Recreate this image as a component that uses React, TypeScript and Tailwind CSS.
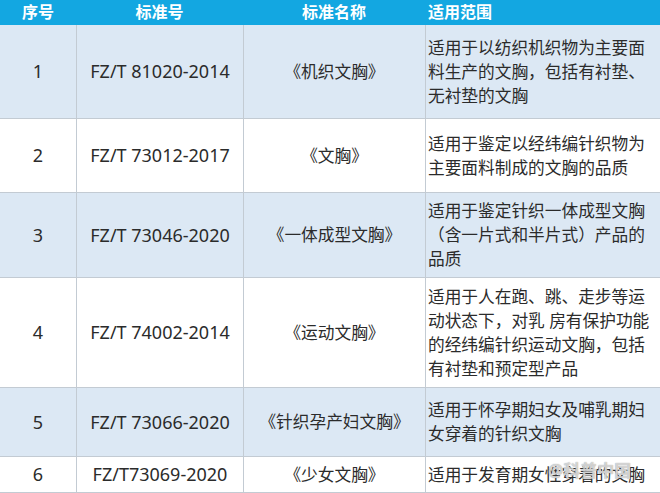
const rows = [
  {
    no: '1',
    code: 'FZ/T 81020-2014',
    name: '《机织文胸》',
    scope: ['适用于以纺织机织物为主要面', '料生产的文胸，包括有衬垫、', '无衬垫的文胸'],
    h: 'h-[94px]',
    shaded: true,
  },
  {
    no: '2',
    code: 'FZ/T 73012-2017',
    name: '《文胸》',
    scope: ['适用于鉴定以经纬编针织物为', '主要面料制成的文胸的品质'],
    h: 'h-[74px]',
    shaded: false,
  },
  {
    no: '3',
    code: 'FZ/T 73046-2020',
    name: '《一体成型文胸》',
    scope: ['适用于鉴定针织一体成型文胸', '（含一片式和半片式）产品的', '品质'],
    h: 'h-[85px]',
    shaded: true,
  },
  {
    no: '4',
    code: 'FZ/T 74002-2014',
    name: '《运动文胸》',
    scope: ['适用于人在跑、跳、走步等运', '动状态下，对乳 房有保护功能', '的经纬编针织运动文胸，包括', '有衬垫和预定型产品'],
    h: 'h-[110px]',
    shaded: false,
  },
  {
    no: '5',
    code: 'FZ/T 73066-2020',
    name: '《针织孕产妇文胸》',
    scope: ['适用于怀孕期妇女及哺乳期妇', '女穿着的针织文胸'],
    h: 'h-[69px]',
    shaded: true,
  },
  {
    no: '6',
    code: 'FZ/T73069-2020',
    name: '《少女文胸》',
    scope: ['适用于发育期女性穿着的文胸'],
    h: 'h-[36px]',
    shaded: false,
  },
];

export default function App() {
  return (
    <div
      className="relative h-[493px] w-[660px] overflow-hidden bg-white text-[#2b2b2b]"
      style={{ fontFamily: '"Noto Sans", "Noto Sans CJK SC", sans-serif' }}
    >
      <div className="grid h-[25px] grid-cols-[76px_167px_182px_235px] bg-[#13a7e1] text-[16px] font-bold leading-[25px] text-white">
        <div className="text-center">序号</div>
        <div className="text-center">标准号</div>
        <div className="text-center">标准名称</div>
        <div className="pl-[3px]">适用范围</div>
      </div>
      {rows.map((r) => (
        <div
          key={r.no}
          className={`grid grid-cols-[76px_167px_182px_235px] border-b border-[#c3cbd3] ${r.h} ${
            r.shaded ? 'bg-[#dce8f4]' : 'bg-white'
          }`}
        >
          <div className="flex items-center justify-center text-[18px]">{r.no}</div>
          <div className="flex items-center justify-center border-l border-[#c3cbd3] text-[18px]">
            {r.code}
          </div>
          <div className="flex items-center justify-center border-l border-[#c3cbd3] text-[16.7px]">
            {r.name}
          </div>
          <div className="flex flex-col justify-center border-l border-[#c3cbd3] pl-[2px] text-[16.7px] leading-[24px]">
            {r.scope.map((line) => (
              <div key={line} className="whitespace-nowrap">
                {line}
              </div>
            ))}
          </div>
        </div>
      ))}
      {/* watermark over the last row */}
      <div
        className="absolute left-[548px] top-[458px] text-[17px] font-bold text-white/60"
        style={{ textShadow: '0 0 1px #888' }}
      >
        @科普中国
      </div>
    </div>
  );
}
